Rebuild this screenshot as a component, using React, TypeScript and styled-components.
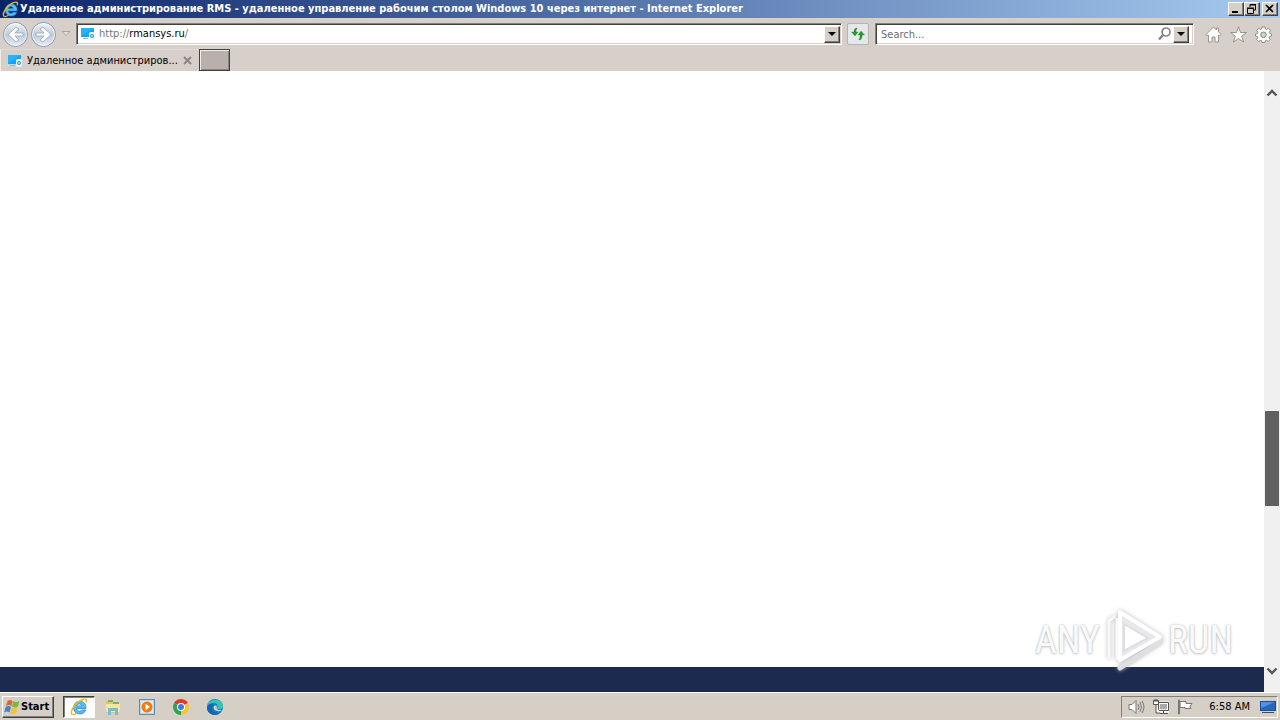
import React from "react";
import styled, { createGlobalStyle, css } from "styled-components";

const Global = createGlobalStyle`
  *, *::before, *::after { box-sizing: border-box; }
  body {
    margin: 0;
    background: #d6cfca;
    color: #000;
    font-family: "DejaVu Sans Condensed", "Noto Sans", sans-serif;
    font-size: 11px;
    line-height: 14px;
  }
  button, input { font: inherit; color: inherit; margin: 0; }
  svg { display: block; flex: none; }
`;

const raised = css`
  border: 1px solid;
  border-color: #fff #404040 #404040 #fff;
  box-shadow: inset -1px -1px 0 #808080;
  background: #d6cfc8;
`;

const Desktop = styled.div`
  display: flex;
  flex-direction: column;
  min-height: 100vh;
`;

const TitleBar = styled.header`
  display: flex;
  align-items: center;
  height: 18px;
  padding: 0 2px;
  gap: 1px;
  background: linear-gradient(90deg, #0a246a, #a6caf0);
  color: #fff;
`;

const Title = styled.h1`
  flex: 1;
  min-width: 0;
  margin: 0;
  font-size: 11px;
  font-weight: 700;
  line-height: 18px;
  white-space: nowrap;
  overflow: hidden;
`;

const WindowButtons = styled.div`
  display: flex;
`;

const WindowButton = styled.button<{ $gap?: boolean }>`
  ${raised}
  display: flex;
  align-items: center;
  justify-content: center;
  width: 16px;
  height: 14px;
  padding: 0;
  margin-left: ${(p) => (p.$gap ? 2 : 0)}px;
`;

const NavBar = styled.nav`
  display: flex;
  align-items: center;
  height: 31px;
  padding: 0 8px 0 2px;
  border-top: 1px solid #d8d4c0;
  background: #d6cfca;
`;

const PlainButton = styled.button`
  display: flex;
  align-items: center;
  justify-content: center;
  padding: 0;
  border: 0;
  background: none;
`;

const History = styled.div`
  display: flex;
  align-items: center;
  gap: 1px;
  width: 74px;
`;

const Field = styled.div<{ $width?: number }>`
  display: flex;
  align-items: center;
  flex: ${(p) => (p.$width ? `0 1 ${p.$width}px` : "1 1 0")};
  min-width: 0;
  height: 22px;
  padding: 0 ${(p) => (p.$width ? 4 : 1)}px 0 4px;
  background: #fff;
  border: 1px solid;
  border-color: #808080 #fff #fff #808080;
  box-shadow: inset 1px 1px 0 #404040, inset -1px -1px 0 #d6cfca;
`;

const FieldInput = styled.input`
  flex: 1;
  min-width: 0;
  height: 16px;
  padding: 0 1px;
  border: 0;
  outline: 0;
  background: transparent;
  &::placeholder { color: #6d6d6d; opacity: 1; }
`;

const Address = styled.a`
  flex: 1;
  min-width: 0;
  padding-left: 4px;
  color: #777;
  text-decoration: none;
  white-space: nowrap;
`;

const Host = styled.span`
  color: #000;
`;

const DropButton = styled.button`
  ${raised}
  display: flex;
  align-items: center;
  justify-content: center;
  width: 16px;
  height: 17px;
  padding: 0;
`;

const RefreshButton = styled(PlainButton)`
  width: 22px;
  height: 22px;
  margin: 0 6px 0 5px;
  border: 1px solid #b4b4b0;
  border-radius: 2px;
  background: #e4e8ec;
`;

const Tools = styled.div`
  display: flex;
  gap: 8px;
  margin-left: 11px;
`;

const TabRow = styled.div`
  display: flex;
  height: 22px;
  background: #d6cfca;
`;

const Tab = styled.div`
  display: flex;
  align-items: center;
  width: 199px;
  padding: 0 7px;
  border-left: 1px solid #efece9;
  border-top: 1px solid #dedad6;
`;

const TabLabel = styled.span`
  flex: 1;
  min-width: 0;
  padding-left: 5px;
  white-space: nowrap;
  overflow: hidden;
`;

const NewTab = styled.button`
  width: 31px;
  height: 22px;
  padding: 0;
  border: 1px solid #404040;
  box-shadow: inset 1px 1px 0 #f0ece8, inset -1px -1px 0 #8b8380;
  background: #b9b0ac;
`;

const Viewport = styled.main`
  position: relative;
  display: flex;
  flex: 1;
`;

const Page = styled.div`
  display: flex;
  flex-direction: column;
  justify-content: flex-end;
  flex: 1;
  background: #fff;
`;

const Footer = styled.footer`
  height: 25px;
  background: #1c2a4f;
`;

const Scrollbar = styled.div`
  display: flex;
  flex-direction: column;
  width: 16px;
  padding: 13px 0;
  background: #f0f0f0;
`;

const ScrollButton = styled(PlainButton)`
  height: 17px;
`;

const Track = styled.div`
  display: flex;
  flex-direction: column;
  flex: 1;
  padding: 0 1px;
`;

const Space = styled.div<{ $share: number }>`
  flex: ${(p) => p.$share} 0 0;
`;

const Thumb = styled.div`
  height: 95px;
  background: #606060;
`;

const Watermark = styled.div`
  position: absolute;
  right: 47px;
  bottom: 20px;
  display: flex;
  align-items: center;
  gap: 5px;
  color: #fafafa;
  font-family: "Roboto Condensed", "Open Sans Condensed", "DejaVu Sans Condensed", sans-serif;
  font-size: 38px;
  font-weight: 400;
  line-height: 64px;
  text-shadow: 0 0 2px #b4b4b4, 0 1px 3px #ccc;
`;

const TaskBar = styled.footer`
  display: flex;
  align-items: center;
  height: 28px;
  padding: 0 2px;
  border-top: 1px solid #fff;
  background: #d6cfc6;
`;

const StartButton = styled.button`
  ${raised}
  display: flex;
  align-items: center;
  gap: 1px;
  width: 52px;
  height: 22px;
  padding: 0 1px;
  font-weight: 700;
`;

const Launchers = styled.div`
  display: flex;
  flex: 1;
  gap: 2px;
  margin-left: 9px;
`;

const Launcher = styled.button<{ $active?: boolean }>`
  display: flex;
  align-items: center;
  justify-content: center;
  width: 32px;
  height: 22px;
  padding: 0;
  border: 1px solid;
  border-color: ${(p) => (p.$active ? "#404040 #fff #fff #404040" : "transparent")};
  box-shadow: ${(p) => (p.$active ? "inset 1px 1px 0 #808080" : "none")};
  background: ${(p) => (p.$active ? "#fff" : "none")};
`;

const Tray = styled.div`
  display: flex;
  align-items: center;
  height: 22px;
  gap: 8px;
  padding: 0 1px 0 6px;
  border: 1px solid;
  border-color: #808080 #fff #fff #808080;
`;

const Clock = styled.time`
  padding: 0 2px 0 8px;
  white-space: nowrap;
`;

const IeIcon = ({ size = 17 }: { size?: number }) => (
  <svg width={size} height={size} viewBox="0 0 18 18" fill="none">
    <path d="M9.500 3.200c-7.400 0-8.500 12.600.4 12.800 3 0 5-1.600 5.800-4.100h-4c-1.300 2.100-5 1.400-5-1.400h9.300c.3-4.500-2.200-7.300-6.500-7.300zM6.800 8c.4-2.800 4.800-2.800 5 0z" fill="#57bdf0" stroke="#1d7fc8" strokeWidth=".7" />
    <path d="M2.600 16.600C-1 15.500 4 5.500 11.500 2c4.500-2 5.500-.2 4.600 2.400" stroke="#efb71b" strokeWidth="1.500" />
    <path d="M2.600 16.600c1.200.2 2.700-.4 4.200-1.400" stroke="#efb71b" strokeWidth="1.300" />
  </svg>
);

const SiteIcon = () => (
  <svg width="14" height="14" viewBox="0 0 14 14">
    <path d="M0 1h13v9H0z" fill="#18a4ee" />
    <path d="M0 1h13L0 9z" fill="#28b3f7" />
    <path d="M2 11h5v1H2z" fill="#80bfe2" />
    <rect x="8" y="5" width="6" height="8" rx="2" fill="#e8f6ff" />
    <circle cx="11" cy="9" r="2" fill="#2999db" />
    <path d="M11 8v2" stroke="#fff" />
  </svg>
);

const RoundArrow = ({ forward }: { forward?: boolean }) => (
  <svg width="27" height="27" viewBox="0 0 27 27">
    <defs>
      <linearGradient id={forward ? "forward" : "back"} x1="0" y1="0" x2="0" y2="1">
        <stop stopColor="#f3f5f8" />
        <stop offset=".5" stopColor="#c0cbda" />
        <stop offset="1" stopColor="#e4eefa" />
      </linearGradient>
    </defs>
    <circle cx="13.500" cy="13.500" r="12" fill={`url(#${forward ? "forward" : "back"})`} stroke="#8796aa" />
    <circle cx="13.500" cy="13.500" r="11" fill="none" stroke="#fff" strokeOpacity=".7" />
    <path
      d={forward ? "M6 12h8l-4-4 3-2 8 7.500-8 7.500-3-2 4-4H6z" : "M21 12h-8l4-4-3-2-8 7.500 8 7.500 3-2-4-4h8z"}
      fill="#fff"
      stroke="#93a4b8"
      strokeWidth=".8"
    />
  </svg>
);

const DownArrow = () => (
  <svg width="8" height="4" viewBox="0 0 8 4"><path d="M0 0h8L4 4z" fill="#000" /></svg>
);

const Chevron = ({ up }: { up?: boolean }) => (
  <svg width="12" height="8" viewBox="0 0 12 8">
    <path d={up ? "M1.500 6.500L6 2l4.500 4.500" : "M1.500 1.500L6 6l4.500-4.500"} fill="none" stroke="#555" strokeWidth="2.400" />
  </svg>
);

const MarkDrawing = styled.svg`
  filter: drop-shadow(0 0 2px #bbb);
`;

const PlayMark = () => (
  <MarkDrawing width="58" height="64" viewBox="0 0 58 64" fill="none" strokeLinejoin="round">
    <path d="M4 51V13l6-5M12 10v42" stroke="#f8f8f8" strokeWidth="3" />
    <path d="M15 60L55 34V29" stroke="#dfdfe2" strokeWidth="5" strokeLinecap="round" />
    <path d="M15 4v48l40-23z" fill="#e8e8ea" stroke="#fff" strokeWidth="4" />
    <path d="M19 16v27l24-13z" fill="#fff" stroke="#dedee0" strokeWidth="2" />
  </MarkDrawing>
);

export default function App() {
  return (
    <>
      <Global />
      <Desktop>
        <TitleBar>
          <IeIcon />
          <Title>Удаленное администрирование RMS - удаленное управление рабочим столом Windows 10 через интернет - Internet Explorer</Title>
          <WindowButtons>
            <WindowButton aria-label="Minimize"><svg width="10" height="10"><path d="M1 8h6" stroke="#000" strokeWidth="2" /></svg></WindowButton>
            <WindowButton aria-label="Restore">
              <svg width="10" height="10" fill="none" stroke="#000"><path d="M3 3V.5h5.500V6H7M3 1h6M.5 4.500h6v5h-6zM0 4h7" /></svg>
            </WindowButton>
            <WindowButton $gap aria-label="Close"><svg width="10" height="10"><path d="M1 1l7 7M8 1L1 8" stroke="#000" strokeWidth="1.700" /></svg></WindowButton>
          </WindowButtons>
        </TitleBar>

        <NavBar>
          <History>
            <PlainButton aria-label="Back"><RoundArrow /></PlainButton>
            <PlainButton aria-label="Forward"><RoundArrow forward /></PlainButton>
            <PlainButton aria-label="Recent pages">
              <svg width="16" height="8"><path d="M4 1.500h8l-4 4z" fill="#e6e2de" stroke="#aaa5a0" /></svg>
            </PlainButton>
          </History>
          <Field>
            <SiteIcon />
            <Address href="http://rmansys.ru/">http://<Host>rmansys.ru</Host>/</Address>
            <DropButton aria-label="Show address list"><DownArrow /></DropButton>
          </Field>
          <RefreshButton aria-label="Refresh">
            <svg width="16" height="16" viewBox="0 0 16 16" fill="#249b2b" stroke="#137a1b" strokeWidth=".3">
              <path d="M7 2C4.500 2 4 4 4 6H1.500l3.500 4 3-4H6c0-2 .2-3 1-3zM9 14c2.500 0 3-2 3-4V9h2.500L11 5 8 9h2v1c0 2-.2 3-1 3z" />
            </svg>
          </RefreshButton>
          <Field $width={319}>
            <FieldInput type="text" aria-label="Search" placeholder="Search..." />
            <PlainButton aria-label="Go">
              <svg width="16" height="16" fill="none" stroke="#858585"><circle cx="9" cy="6" r="4" strokeWidth="1.700" /><path d="M6 9l-4 4.500" strokeWidth="2.500" /></svg>
            </PlainButton>
            <DropButton aria-label="Search options"><DownArrow /></DropButton>
          </Field>
          <Tools>
            <PlainButton aria-label="Home">
              <svg width="17" height="17" viewBox="0 0 17 17"><path d="M8.500 1L1 8.500 2.500 10 3.500 9v7h3.500v-5h3v5h3.500V9l1 1L16 8.500l-2.500-2.500V2h-2v2z" fill="#fff" stroke="#8e8a86" strokeWidth=".9" /></svg>
            </PlainButton>
            <PlainButton aria-label="Favorites">
              <svg width="17" height="17" viewBox="0 0 17 17"><path d="M8.500.8l2 5.700h5.900l-4.700 3.700 1.800 5.800-5-3.500-5 3.500 1.800-5.800L.600 6.500h5.900z" fill="#fff" stroke="#8e8a86" strokeWidth=".9" /></svg>
            </PlainButton>
            <PlainButton aria-label="Tools">
              <svg width="17" height="17" viewBox="0 0 17 17">
                <path d="M7 1h3l.5 2 1 .5 2-1.200 2 2-1.200 2 .4 1L16.500 8v2l-2 .5-.4 1 1.100 1.900-2 2-1.800-1.100-1 .4-.500 1.800H7l-.5-1.800-1-.4-1.800 1.100-2-2 1.100-1.900-.4-1L.500 10V8l2-.6.4-1-1.200-2 2-2 2 1.100 1-.5z" fill="#fff" stroke="#85817d" strokeWidth=".9" />
                <circle cx="8.500" cy="8.800" r="2.800" fill="#d6cfca" stroke="#85817d" />
              </svg>
            </PlainButton>
          </Tools>
        </NavBar>

        <TabRow>
          <Tab>
            <SiteIcon />
            <TabLabel>Удаленное администриров...</TabLabel>
            <PlainButton aria-label="Close tab"><svg width="9" height="9"><path d="M1 1l7 7M8 1L1 8" stroke="#8b8581" strokeWidth="2" /></svg></PlainButton>
          </Tab>
          <NewTab aria-label="New tab" />
        </TabRow>

        <Viewport>
          <Page><Footer /></Page>
          <Scrollbar>
            <ScrollButton aria-label="Scroll up"><Chevron up /></ScrollButton>
            <Track><Space $share={310} /><Thumb /><Space $share={156} /></Track>
            <ScrollButton aria-label="Scroll down"><Chevron /></ScrollButton>
          </Scrollbar>
          <Watermark><span>ANY</span><PlayMark /><span>RUN</span></Watermark>
        </Viewport>

        <TaskBar>
          <StartButton>
            <svg width="16" height="16" viewBox="0 0 16 16">
              <path d="M3.500 2q2.500-2 5 0L7.300 7Q5 5 2 7z" fill="#e7622b" />
              <path d="M9 2q3 2 6.500 0L14 7.500q-3 2-6 0z" fill="#78b843" />
              <path d="M1.700 8q3-2 5.300 0l-1.500 5.500Q3 11.500.2 13.500z" fill="#3c83cf" />
              <path d="M7.700 8.300q3 2 6 0L12.300 14q-3 2-6 0z" fill="#f5c237" />
            </svg>
            Start
          </StartButton>
          <Launchers>
            <Launcher $active aria-label="Internet Explorer"><IeIcon size={18} /></Launcher>
            <Launcher aria-label="File Explorer">
              <svg width="16" height="16" viewBox="0 0 16 16">
                <path d="M1 2h5l1 1h7v11H1z" fill="#e5c463" />
                <path d="M3 1h5v2H3zM8 3h6v2H8z" fill="#7fae73" />
                <path d="M1 5h14v8H1z" fill="#f7e59c" />
                <path d="M3 16V9h10v7h-3v-4H6v4z" fill="#72bddd" />
              </svg>
            </Launcher>
            <Launcher aria-label="Media Player">
              <svg width="16" height="16" viewBox="0 0 16 16">
                <rect x=".5" y=".5" width="15" height="15" fill="#b9d7ee" stroke="#5c8db8" />
                <rect x="2" y="2" width="12" height="12" fill="#dfeaf2" />
                <circle cx="8" cy="8" r="5.500" fill="#f17c0c" />
                <path d="M6.500 4.800L11 8l-4.500 3.200z" fill="#fff" />
              </svg>
            </Launcher>
            <Launcher aria-label="Chrome">
              <svg width="16" height="16" viewBox="0 0 16 16">
                <path d="M8 8L1.100 4A8 8 0 0 1 14.900 4z" fill="#df3b2f" />
                <path d="M8 8l6.900-4A8 8 0 0 1 8 16z" fill="#f7c52c" />
                <path d="M8 8v8A8 8 0 0 1 1.100 4z" fill="#31a350" />
                <circle cx="8" cy="8" r="4" fill="#fff" /><circle cx="8" cy="8" r="3" fill="#397de2" />
              </svg>
            </Launcher>
            <Launcher aria-label="Edge">
              <svg width="16" height="16" viewBox="0 0 16 16">
                <circle cx="8" cy="8" r="8" fill="#147cc5" />
                <path d="M0 8C0-1 16-2 16 7c0 4-5 4-6 2 2-3-1-5-3-5-4 0-6 2-7 4z" fill="#35c4b2" />
                <path d="M6 7c-3 4 1 8 6 7-4 4-12 1-12-5 0-3 3-5 6-4z" fill="#1266b3" />
                <path d="M7 7c1-1 3-.5 3 1-1 1 0 3 3 3h2c-4 3-10 0-8-4z" fill="#d6cfc6" />
              </svg>
            </Launcher>
          </Launchers>
          <Tray>
            <svg width="17" height="16" viewBox="0 0 17 16" fill="none" stroke="#777" strokeWidth="1">
              <path d="M1 5.500h3l4-4v13l-4-4H1z" fill="#fff" /><path d="M10 5q2 3 0 6M12 3q3 5 0 10M14 2q4 6 0 12" />
            </svg>
            <svg width="16" height="16" viewBox="0 0 16 16" fill="none" stroke="#555">
              <path d="M5 4h10v8H5z" stroke="#fff" strokeWidth="3" />
              <path d="M5.500 3.500h10v8h-10zM7 14.500h8M10.500 12v2" />
              <path d="M7 5h7v5H7z" fill="#a9a9a9" stroke="none" />
              <path d="M.5 1.500h5v4h-5zM3 6v8h4" fill="#fff" /><path d="M2 0v3M4 0v3" />
            </svg>
            <svg width="16" height="16" viewBox="0 0 16 16" fill="#fff" stroke="#777">
              <path d="M1.500 1h1v14h-1zM3 2.500h6v2h6l-2 3 1 2H8v-1H3z" />
            </svg>
            <Clock>6:58 AM</Clock>
            <svg width="16" height="14" viewBox="0 0 16 14">
              <path d="M0 1h16v10H0z" fill="#1a4f9f" /><path d="M1 2h14v8H1z" fill="#2467c0" /><path d="M1 2h14L1 8z" fill="#5592dc" /><path d="M2 12h12v1H2z" fill="#3b4d66" />
            </svg>
          </Tray>
        </TaskBar>
      </Desktop>
    </>
  );
}
